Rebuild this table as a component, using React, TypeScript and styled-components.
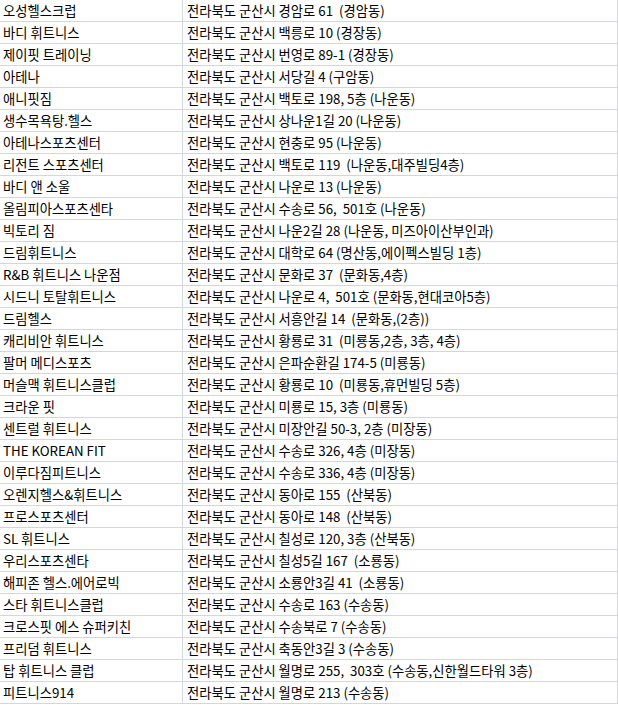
import React from "react";
import styled, { createGlobalStyle } from "styled-components";

const GlobalStyle = createGlobalStyle`
	html, body {
		margin: 0;
		padding: 0;
		background: #ffffff;
	}
	body {
		font-family: "Noto Sans CJK KR", "Noto Sans", sans-serif;
		font-size: 13.3px;
		color: #000000;
		overflow: hidden;
	}
`;

const Table = styled.div`
	width: 617px;
	border-right: 1px solid #d0d7e2;
`;

const Row = styled.div`
	display: grid;
	grid-template-columns: 182px 1fr;
	height: 22px;
	box-sizing: border-box;
	border-bottom: 1px solid #d0d7e2;
`;

const Cell = styled.div<{ $first?: boolean }>`
	padding-left: ${(p) => (p.$first ? "3px" : "4px")};
	border-left: ${(p) => (p.$first ? "none" : "1px solid #d0d7e2")};
	line-height: 22px;
	white-space: pre;
	overflow: hidden;
`;

const gyms: [string, string][] = [
	["오성헬스크럽", "전라북도 군산시 경암로 61  (경암동)"],
	["바디 휘트니스", "전라북도 군산시 백릉로 10 (경장동)"],
	["제이핏 트레이닝", "전라북도 군산시 번영로 89-1 (경장동)"],
	["아테나", "전라북도 군산시 서당길 4 (구암동)"],
	["애니핏짐", "전라북도 군산시 백토로 198, 5층 (나운동)"],
	["생수목욕탕.헬스", "전라북도 군산시 상나운1길 20 (나운동)"],
	["아테나스포츠센터", "전라북도 군산시 현충로 95 (나운동)"],
	["리전트 스포츠센터", "전라북도 군산시 백토로 119  (나운동,대주빌딩4층)"],
	["바디 앤 소울", "전라북도 군산시 나운로 13 (나운동)"],
	["올림피아스포츠센타", "전라북도 군산시 수송로 56,  501호 (나운동)"],
	["빅토리 짐", "전라북도 군산시 나운2길 28 (나운동, 미즈아이산부인과)"],
	["드림휘트니스", "전라북도 군산시 대학로 64 (명산동,에이펙스빌딩 1층)"],
	["R&B 휘트니스 나운점", "전라북도 군산시 문화로 37  (문화동,4층)"],
	["시드니 토탈휘트니스", "전라북도 군산시 나운로 4,  501호 (문화동,현대코아5층)"],
	["드림헬스", "전라북도 군산시 서흥안길 14  (문화동,(2층))"],
	["캐리비안 휘트니스", "전라북도 군산시 황룡로 31  (미룡동,2층, 3층, 4층)"],
	["팔머 메디스포츠", "전라북도 군산시 은파순환길 174-5 (미룡동)"],
	["머슬맥 휘트니스클럽", "전라북도 군산시 황룡로 10  (미룡동,휴먼빌딩 5층)"],
	["크라운 핏", "전라북도 군산시 미룡로 15, 3층 (미룡동)"],
	["센트럴 휘트니스", "전라북도 군산시 미장안길 50-3, 2층 (미장동)"],
	["THE KOREAN FIT", "전라북도 군산시 수송로 326, 4층 (미장동)"],
	["이루다짐피트니스", "전라북도 군산시 수송로 336, 4층 (미장동)"],
	["오렌지헬스&휘트니스", "전라북도 군산시 동아로 155  (산북동)"],
	["프로스포츠센터", "전라북도 군산시 동아로 148  (산북동)"],
	["SL 휘트니스", "전라북도 군산시 칠성로 120, 3층 (산북동)"],
	["우리스포츠센타", "전라북도 군산시 칠성5길 167  (소룡동)"],
	["해피존 헬스.에어로빅", "전라북도 군산시 소룡안3길 41  (소룡동)"],
	["스타 휘트니스클럽", "전라북도 군산시 수송로 163 (수송동)"],
	["크로스핏 에스 슈퍼키친", "전라북도 군산시 수송북로 7 (수송동)"],
	["프리덤 휘트니스", "전라북도 군산시 축동안3길 3 (수송동)"],
	["탑 휘트니스 클럽", "전라북도 군산시 월명로 255,  303호 (수송동,신한월드타워 3층)"],
	["피트니스914", "전라북도 군산시 월명로 213 (수송동)"],
];

export default function App() {
	return (
		<>
			<GlobalStyle />
			<Table>
				{gyms.map(([name, addr], i) => (
					<Row key={i}>
						<Cell $first>{name}</Cell>
						<Cell>{addr}</Cell>
					</Row>
				))}
			</Table>
		</>
	);
}
